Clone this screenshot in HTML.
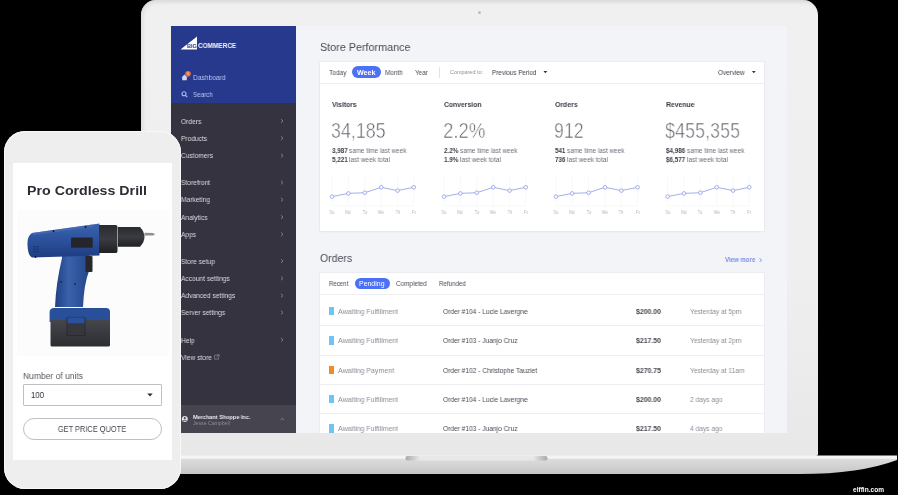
<!DOCTYPE html>
<html><head><meta charset="utf-8"><style>
html,body{margin:0;padding:0;background:#000;width:898px;height:495px;overflow:hidden}
body{position:relative;font-family:'Liberation Sans', sans-serif}
span{position:absolute;white-space:nowrap;will-change:transform}
</style></head><body>
<div style="position:absolute;left:141px;top:0px;width:677px;height:456px;background:linear-gradient(#dcdcdc 0px,#ebebeb 3px,#f0f0f0 6px,#efefef 60%,#e8e8e8 100%);border-radius:15px 15px 2px 2px;box-shadow:inset 3px 2px 4px -1px #dcdcdc"></div>
<div style="position:absolute;left:477.5px;top:11px;width:3px;height:3px;border-radius:50%;background:#bdbdbd"></div>
<svg style="position:absolute;left:0;top:0" width="898" height="495">
<defs>
<linearGradient id="bg" x1="0" y1="0" x2="0" y2="1">
<stop offset="0" stop-color="#f4f4f4"/><stop offset="0.15" stop-color="#f4f4f4"/><stop offset="0.2" stop-color="#dcdcdc"/><stop offset="0.85" stop-color="#cacaca"/><stop offset="1" stop-color="#c4c4c4"/>
</linearGradient>
<linearGradient id="nt" x1="0" y1="0" x2="1" y2="0">
<stop offset="0" stop-color="#a8a8a8"/><stop offset="0.1" stop-color="#e8e8e8"/><stop offset="0.9" stop-color="#e8e8e8"/><stop offset="1" stop-color="#a8a8a8"/>
</linearGradient>
</defs>
<path d="M62 455.5 L897 455.5 L897 460 Q860 474 800 474 L160 474 Q100 474 62 460 Z" fill="url(#bg)"/>
<rect x="405.5" y="456" width="142" height="4.5" rx="2" fill="url(#nt)"/>
</svg>
<div style="position:absolute;left:171px;top:26px;width:616px;height:407px;background:#f3f4f7;overflow:hidden"></div>
<div style="position:absolute;left:171px;top:26px;width:125px;height:77px;background:#26398c"></div>
<div style="position:absolute;left:171px;top:103px;width:125px;height:302px;background:#34333f"></div>
<div style="position:absolute;left:171px;top:405px;width:125px;height:28px;background:#45444f"></div>
<svg style="position:absolute;left:0;top:0" width="898" height="495"><path d="M180.5 49.5 L197 36.5 L197 49.5 Z" fill="#fff"/></svg>
<svg style="position:absolute;left:0;top:0" width="898" height="495">
<path d="M181.5 77.5 L184.5 74.5 L187.5 77.5 L186.8 77.5 L186.8 80.2 L182.2 80.2 L182.2 77.5 Z" fill="#d0d8fa"/>
<circle cx="188" cy="73.8" r="2.8" fill="#e9743f"/><path d="M188 72.3 L188 74.6" stroke="#fff" stroke-width="0.6"/>
<circle cx="184" cy="93.8" r="2" fill="none" stroke="#aab6f2" stroke-width="1.1"/>
<path d="M185.5 95.3 L187.3 97.1" stroke="#aab6f2" stroke-width="1.2"/>
</svg>
<svg style="position:absolute;left:0;top:0" width="898" height="495"><path d="M281 119.2 L283 121 L281 122.8" fill="none" stroke="#8e8d98" stroke-width="0.8"/></svg>
<svg style="position:absolute;left:0;top:0" width="898" height="495"><path d="M281 136.39999999999998 L283 138.2 L281 140.0" fill="none" stroke="#8e8d98" stroke-width="0.8"/></svg>
<svg style="position:absolute;left:0;top:0" width="898" height="495"><path d="M281 153.79999999999998 L283 155.6 L281 157.4" fill="none" stroke="#8e8d98" stroke-width="0.8"/></svg>
<svg style="position:absolute;left:0;top:0" width="898" height="495"><path d="M281 180.7 L283 182.5 L281 184.3" fill="none" stroke="#8e8d98" stroke-width="0.8"/></svg>
<svg style="position:absolute;left:0;top:0" width="898" height="495"><path d="M281 197.89999999999998 L283 199.7 L281 201.5" fill="none" stroke="#8e8d98" stroke-width="0.8"/></svg>
<svg style="position:absolute;left:0;top:0" width="898" height="495"><path d="M281 215.29999999999998 L283 217.1 L281 218.9" fill="none" stroke="#8e8d98" stroke-width="0.8"/></svg>
<svg style="position:absolute;left:0;top:0" width="898" height="495"><path d="M281 232.5 L283 234.3 L281 236.10000000000002" fill="none" stroke="#8e8d98" stroke-width="0.8"/></svg>
<svg style="position:absolute;left:0;top:0" width="898" height="495"><path d="M281 259.3 L283 261.1 L281 262.90000000000003" fill="none" stroke="#8e8d98" stroke-width="0.8"/></svg>
<svg style="position:absolute;left:0;top:0" width="898" height="495"><path d="M281 276.59999999999997 L283 278.4 L281 280.2" fill="none" stroke="#8e8d98" stroke-width="0.8"/></svg>
<svg style="position:absolute;left:0;top:0" width="898" height="495"><path d="M281 293.8 L283 295.6 L281 297.40000000000003" fill="none" stroke="#8e8d98" stroke-width="0.8"/></svg>
<svg style="position:absolute;left:0;top:0" width="898" height="495"><path d="M281 310.7 L283 312.5 L281 314.3" fill="none" stroke="#8e8d98" stroke-width="0.8"/></svg>
<svg style="position:absolute;left:0;top:0" width="898" height="495"><path d="M281 338.0 L283 339.8 L281 341.6" fill="none" stroke="#8e8d98" stroke-width="0.8"/></svg>
<svg style="position:absolute;left:0;top:0" width="898" height="495"><path d="M217.5 355.2 L214.6 355.2 L214.6 359.2 L218.6 359.2 L218.6 356.6" fill="none" stroke="#8e8d98" stroke-width="0.7"/><path d="M216.4 357.4 L219 354.8 M217.3 354.6 L219.2 354.6 L219.2 356.5" fill="none" stroke="#8e8d98" stroke-width="0.7"/></svg>
<svg style="position:absolute;left:0;top:0" width="898" height="495">
<circle cx="184.8" cy="419" r="3" fill="#dcdce3"/>
<circle cx="184.8" cy="418" r="1" fill="#45444f"/>
<path d="M183 421 Q184.8 419 186.6 421" stroke="#45444f" stroke-width="0.9" fill="none"/>
<path d="M280.5 420 L282.3 418.3 L284.1 420" fill="none" stroke="#8e8d98" stroke-width="0.8"/>
</svg>
<div style="position:absolute;left:319.8px;top:62px;width:444.6px;height:168.5px;background:#fff;box-shadow:0 0 0 0.6px #e6e7eb, 0 1px 2px rgba(0,0,0,0.05)"></div>
<div style="position:absolute;left:319.8px;top:83px;width:445px;height:0.8px;background:#eceef2"></div>
<div style="position:absolute;left:351.5px;top:66.2px;width:29px;height:11.8px;border-radius:6px;background:#4c70f6"></div>
<div style="position:absolute;left:439.2px;top:67px;width:0.7px;height:11px;background:#e2e3e8"></div>
<svg style="position:absolute;left:0;top:0" width="898" height="495"><path d="M543.5 71 L547.3 71 L545.4 73.2 Z" fill="#333"/><path d="M751.9 71 L755.7 71 L753.8 73.2 Z" fill="#333"/></svg>
<svg style="position:absolute;left:0;top:0" width="898" height="495"><line x1="332.1" y1="176.5" x2="332.1" y2="206" stroke="#f3f4f6" stroke-width="0.6"/><line x1="348.40000000000003" y1="176.5" x2="348.40000000000003" y2="206" stroke="#f3f4f6" stroke-width="0.6"/><line x1="364.8" y1="176.5" x2="364.8" y2="206" stroke="#f3f4f6" stroke-width="0.6"/><line x1="381.20000000000005" y1="176.5" x2="381.20000000000005" y2="206" stroke="#f3f4f6" stroke-width="0.6"/><line x1="397.6" y1="176.5" x2="397.6" y2="206" stroke="#f3f4f6" stroke-width="0.6"/><line x1="413.8" y1="176.5" x2="413.8" y2="206" stroke="#f3f4f6" stroke-width="0.6"/><line x1="332.1" y1="206" x2="413.8" y2="206" stroke="#f3f4f6" stroke-width="0.6"/><polyline points="332.1,196.6 348.40000000000003,193.4 364.8,192.7 381.20000000000005,187.3 397.6,190.6 413.8,187.3" fill="none" stroke="#8c9ae6" stroke-width="0.8"/><circle cx="332.1" cy="196.6" r="1.8" fill="#fff" stroke="#8c9ae6" stroke-width="0.8"/><circle cx="348.40000000000003" cy="193.4" r="1.8" fill="#fff" stroke="#8c9ae6" stroke-width="0.8"/><circle cx="364.8" cy="192.7" r="1.8" fill="#fff" stroke="#8c9ae6" stroke-width="0.8"/><circle cx="381.20000000000005" cy="187.3" r="1.8" fill="#fff" stroke="#8c9ae6" stroke-width="0.8"/><circle cx="397.6" cy="190.6" r="1.8" fill="#fff" stroke="#8c9ae6" stroke-width="0.8"/><circle cx="413.8" cy="187.3" r="1.8" fill="#fff" stroke="#8c9ae6" stroke-width="0.8"/><line x1="444.1" y1="176.5" x2="444.1" y2="206" stroke="#f3f4f6" stroke-width="0.6"/><line x1="460.40000000000003" y1="176.5" x2="460.40000000000003" y2="206" stroke="#f3f4f6" stroke-width="0.6"/><line x1="476.8" y1="176.5" x2="476.8" y2="206" stroke="#f3f4f6" stroke-width="0.6"/><line x1="493.20000000000005" y1="176.5" x2="493.20000000000005" y2="206" stroke="#f3f4f6" stroke-width="0.6"/><line x1="509.6" y1="176.5" x2="509.6" y2="206" stroke="#f3f4f6" stroke-width="0.6"/><line x1="525.8000000000001" y1="176.5" x2="525.8000000000001" y2="206" stroke="#f3f4f6" stroke-width="0.6"/><line x1="444.1" y1="206" x2="525.8000000000001" y2="206" stroke="#f3f4f6" stroke-width="0.6"/><polyline points="444.1,196.6 460.40000000000003,193.4 476.8,192.7 493.20000000000005,187.3 509.6,190.6 525.8000000000001,187.3" fill="none" stroke="#8c9ae6" stroke-width="0.8"/><circle cx="444.1" cy="196.6" r="1.8" fill="#fff" stroke="#8c9ae6" stroke-width="0.8"/><circle cx="460.40000000000003" cy="193.4" r="1.8" fill="#fff" stroke="#8c9ae6" stroke-width="0.8"/><circle cx="476.8" cy="192.7" r="1.8" fill="#fff" stroke="#8c9ae6" stroke-width="0.8"/><circle cx="493.20000000000005" cy="187.3" r="1.8" fill="#fff" stroke="#8c9ae6" stroke-width="0.8"/><circle cx="509.6" cy="190.6" r="1.8" fill="#fff" stroke="#8c9ae6" stroke-width="0.8"/><circle cx="525.8000000000001" cy="187.3" r="1.8" fill="#fff" stroke="#8c9ae6" stroke-width="0.8"/><line x1="555.9" y1="176.5" x2="555.9" y2="206" stroke="#f3f4f6" stroke-width="0.6"/><line x1="572.1999999999999" y1="176.5" x2="572.1999999999999" y2="206" stroke="#f3f4f6" stroke-width="0.6"/><line x1="588.6" y1="176.5" x2="588.6" y2="206" stroke="#f3f4f6" stroke-width="0.6"/><line x1="605.0" y1="176.5" x2="605.0" y2="206" stroke="#f3f4f6" stroke-width="0.6"/><line x1="621.4" y1="176.5" x2="621.4" y2="206" stroke="#f3f4f6" stroke-width="0.6"/><line x1="637.6" y1="176.5" x2="637.6" y2="206" stroke="#f3f4f6" stroke-width="0.6"/><line x1="555.9" y1="206" x2="637.6" y2="206" stroke="#f3f4f6" stroke-width="0.6"/><polyline points="555.9,196.6 572.1999999999999,193.4 588.6,192.7 605.0,187.3 621.4,190.6 637.6,187.3" fill="none" stroke="#8c9ae6" stroke-width="0.8"/><circle cx="555.9" cy="196.6" r="1.8" fill="#fff" stroke="#8c9ae6" stroke-width="0.8"/><circle cx="572.1999999999999" cy="193.4" r="1.8" fill="#fff" stroke="#8c9ae6" stroke-width="0.8"/><circle cx="588.6" cy="192.7" r="1.8" fill="#fff" stroke="#8c9ae6" stroke-width="0.8"/><circle cx="605.0" cy="187.3" r="1.8" fill="#fff" stroke="#8c9ae6" stroke-width="0.8"/><circle cx="621.4" cy="190.6" r="1.8" fill="#fff" stroke="#8c9ae6" stroke-width="0.8"/><circle cx="637.6" cy="187.3" r="1.8" fill="#fff" stroke="#8c9ae6" stroke-width="0.8"/><line x1="667.6" y1="176.5" x2="667.6" y2="206" stroke="#f3f4f6" stroke-width="0.6"/><line x1="683.9" y1="176.5" x2="683.9" y2="206" stroke="#f3f4f6" stroke-width="0.6"/><line x1="700.3000000000001" y1="176.5" x2="700.3000000000001" y2="206" stroke="#f3f4f6" stroke-width="0.6"/><line x1="716.7" y1="176.5" x2="716.7" y2="206" stroke="#f3f4f6" stroke-width="0.6"/><line x1="733.1" y1="176.5" x2="733.1" y2="206" stroke="#f3f4f6" stroke-width="0.6"/><line x1="749.3000000000001" y1="176.5" x2="749.3000000000001" y2="206" stroke="#f3f4f6" stroke-width="0.6"/><line x1="667.6" y1="206" x2="749.3000000000001" y2="206" stroke="#f3f4f6" stroke-width="0.6"/><polyline points="667.6,196.6 683.9,193.4 700.3000000000001,192.7 716.7,187.3 733.1,190.6 749.3000000000001,187.3" fill="none" stroke="#8c9ae6" stroke-width="0.8"/><circle cx="667.6" cy="196.6" r="1.8" fill="#fff" stroke="#8c9ae6" stroke-width="0.8"/><circle cx="683.9" cy="193.4" r="1.8" fill="#fff" stroke="#8c9ae6" stroke-width="0.8"/><circle cx="700.3000000000001" cy="192.7" r="1.8" fill="#fff" stroke="#8c9ae6" stroke-width="0.8"/><circle cx="716.7" cy="187.3" r="1.8" fill="#fff" stroke="#8c9ae6" stroke-width="0.8"/><circle cx="733.1" cy="190.6" r="1.8" fill="#fff" stroke="#8c9ae6" stroke-width="0.8"/><circle cx="749.3000000000001" cy="187.3" r="1.8" fill="#fff" stroke="#8c9ae6" stroke-width="0.8"/></svg>
<svg style="position:absolute;left:0;top:0" width="898" height="495"><path d="M759.6 258.2 L761.5 260.1 L759.6 262" fill="none" stroke="#7a8fe6" stroke-width="1"/></svg>
<div style="position:absolute;left:319.8px;top:272.8px;width:444.6px;height:160.2px;background:#fff;box-shadow:0 0 0 0.6px #e6e7eb"></div>
<div style="position:absolute;left:354.5px;top:278px;width:35px;height:11px;border-radius:6px;background:#4c70f6"></div>
<div style="position:absolute;left:319.8px;top:294px;width:445.2px;height:0.8px;background:#eceef2"></div>
<div style="position:absolute;left:319.8px;top:324.9px;width:445.2px;height:0.8px;background:#eceef2"></div>
<div style="position:absolute;left:319.8px;top:354.6px;width:445.2px;height:0.8px;background:#eceef2"></div>
<div style="position:absolute;left:319.8px;top:384px;width:445.2px;height:0.8px;background:#eceef2"></div>
<div style="position:absolute;left:319.8px;top:413.3px;width:445.2px;height:0.8px;background:#eceef2"></div>
<div style="position:absolute;left:329px;top:306.7px;width:4.7px;height:8.5px;background:#6ec5f0"></div>
<div style="position:absolute;left:329px;top:336.1px;width:4.7px;height:8.5px;background:#6ec5f0"></div>
<div style="position:absolute;left:329px;top:365.8px;width:4.7px;height:8.5px;background:#f08c22"></div>
<div style="position:absolute;left:329px;top:394.5px;width:4.7px;height:8.5px;background:#6ec5f0"></div>
<div style="position:absolute;left:329px;top:424.0px;width:4.7px;height:8.5px;background:#6ec5f0"></div>
<div style="position:absolute;left:4px;top:130.5px;width:176.6px;height:358.5px;background:#eeeeee;border-radius:21px;box-shadow:inset 0 0 0 1px #f8f8f8"></div>
<div style="position:absolute;left:12.9px;top:162.6px;width:159.4px;height:297.4px;background:#fff"></div>
<div style="position:absolute;left:17px;top:210px;width:152px;height:146px;background:#fcfcfc"></div>
<svg style="position:absolute;left:0;top:0" width="898" height="495">
<defs>
<linearGradient id="dg" x1="0" y1="0" x2="0" y2="1"><stop offset="0" stop-color="#3b63ad"/><stop offset="0.5" stop-color="#2c519c"/><stop offset="1" stop-color="#1e3c80"/></linearGradient>
<linearGradient id="hg" x1="0" y1="0" x2="1" y2="0"><stop offset="0" stop-color="#1f3f84"/><stop offset="0.4" stop-color="#3a62ab"/><stop offset="1" stop-color="#24468c"/></linearGradient>
<linearGradient id="bk" x1="0" y1="0" x2="0" y2="1"><stop offset="0" stop-color="#46474c"/><stop offset="1" stop-color="#2c2d31"/></linearGradient>
<linearGradient id="ck" x1="0" y1="0" x2="0" y2="1"><stop offset="0" stop-color="#2a2b2f"/><stop offset="0.5" stop-color="#3a3b40"/><stop offset="1" stop-color="#1f2023"/></linearGradient>
</defs>
<path d="M62 254 L89 254 L89 271 Q84 284 83 307 L55 307 Q56 283 62 258 Z" fill="url(#hg)"/>
<path d="M49.6 322 L49.6 312 Q50 308 54 308 L106 308 Q110 308 110 312 L110 322 Z" fill="#2a4f99"/>
<rect x="50.5" y="319.5" width="59.5" height="27" rx="1.5" fill="url(#bk)"/>
<path d="M67 317.5 L85 317.5 L85 335.5 L67 335.5 Z" fill="#36373c" stroke="#222327" stroke-width="0.6"/><path d="M67.3 317.2 L84.7 317.2 L84.7 323.5 L67.3 323.5 Z" fill="#2c5099" stroke="#1d3a7a" stroke-width="0.5"/>
<path d="M32 233 Q27 236 27.5 245 Q28 256 32 257.5 L99.5 255.5 L99.5 223.5 Z" fill="url(#dg)"/>
<path d="M32 233 L93 224.6 L93 227 L33 235 Z" fill="#4a70b8" opacity="0.6"/>
<rect x="71" y="237.4" width="21.7" height="10.3" rx="1" fill="#24262c"/>
<path d="M99 225 L116 225 Q117.5 225.5 117.5 227 L117.5 251 Q117.5 253 116 253 L99 253 Z" fill="url(#ck)"/>
<path d="M118 227 L140 227 Q144.5 232 144.5 237 Q144.5 242 140 246.8 L118 246.8 Z" fill="url(#ck)"/>
<path d="M144.5 232.8 L153 233 L155.2 234.2 L153 235.6 L144.5 235.6 Z" fill="#8e9094"/>
<rect x="85.5" y="256" width="7" height="16" rx="1" fill="#27282c"/>
<path d="M33 247 L39 246.5 M33 249.5 L39 249 M33 252 L39 251.5" stroke="#17306a" stroke-width="0.8"/>
<circle cx="35.5" cy="257" r="0.9" fill="#111"/>
<circle cx="53.5" cy="231" r="0.9" fill="#111"/>
<circle cx="85.5" cy="227" r="0.9" fill="#111"/>
<circle cx="61" cy="282" r="0.8" fill="#111"/>
<circle cx="75" cy="284" r="0.8" fill="#111"/>
</svg>
<div style="position:absolute;left:23.1px;top:384.1px;width:139.3px;height:21.5px;border:0.9px solid #c0c0c4;border-radius:1px;box-sizing:border-box"></div>
<svg style="position:absolute;left:0;top:0" width="898" height="495"><path d="M147.3 393.6 L152.7 393.6 L150 396.6 Z" fill="#2b2c36"/></svg>
<div style="position:absolute;left:23.1px;top:418px;width:139.3px;height:21.6px;border:0.9px solid #c0c0c4;border-radius:11px;box-sizing:border-box"></div>
<span id="t0" style="left:187.00px;top:43.86px;font-size:5.6px;line-height:5.6px;font-weight:700;color:#26398c;transform:scaleX(1.005);transform-origin:0 0;">BIG</span><span id="t1" style="left:197.80px;top:42.96px;font-size:6.9px;line-height:6.9px;font-weight:700;color:#f4f5fb;transform:scaleX(0.932);transform-origin:0 0;">COMMERCE</span><span id="t2" style="left:192.80px;top:74.05px;font-size:7.5px;line-height:7.5px;font-weight:400;color:#b9c3f3;transform:scaleX(0.891);transform-origin:0 0;">Dashboard</span><span id="t3" style="left:192.70px;top:91.05px;font-size:7.5px;line-height:7.5px;font-weight:400;color:#b9c3f3;transform:scaleX(0.837);transform-origin:0 0;">Search</span><span id="t4" style="left:180.80px;top:117.75px;font-size:7.5px;line-height:7.5px;font-weight:400;color:#dcdce3;transform:scaleX(0.885);transform-origin:0 0;">Orders</span><span id="t5" style="left:180.80px;top:134.95px;font-size:7.5px;line-height:7.5px;font-weight:400;color:#dcdce3;transform:scaleX(0.885);transform-origin:0 0;">Products</span><span id="t6" style="left:180.80px;top:152.35px;font-size:7.5px;line-height:7.5px;font-weight:400;color:#dcdce3;transform:scaleX(0.885);transform-origin:0 0;">Customers</span><span id="t7" style="left:180.80px;top:179.25px;font-size:7.5px;line-height:7.5px;font-weight:400;color:#dcdce3;transform:scaleX(0.885);transform-origin:0 0;">Storefront</span><span id="t8" style="left:180.80px;top:196.45px;font-size:7.5px;line-height:7.5px;font-weight:400;color:#dcdce3;transform:scaleX(0.885);transform-origin:0 0;">Marketing</span><span id="t9" style="left:180.80px;top:213.85px;font-size:7.5px;line-height:7.5px;font-weight:400;color:#dcdce3;transform:scaleX(0.885);transform-origin:0 0;">Analytics</span><span id="t10" style="left:180.80px;top:231.05px;font-size:7.5px;line-height:7.5px;font-weight:400;color:#dcdce3;transform:scaleX(0.885);transform-origin:0 0;">Apps</span><span id="t11" style="left:180.80px;top:257.85px;font-size:7.5px;line-height:7.5px;font-weight:400;color:#dcdce3;transform:scaleX(0.885);transform-origin:0 0;">Store setup</span><span id="t12" style="left:180.80px;top:275.15px;font-size:7.5px;line-height:7.5px;font-weight:400;color:#dcdce3;transform:scaleX(0.885);transform-origin:0 0;">Account settings</span><span id="t13" style="left:180.80px;top:292.35px;font-size:7.5px;line-height:7.5px;font-weight:400;color:#dcdce3;transform:scaleX(0.885);transform-origin:0 0;">Advanced settings</span><span id="t14" style="left:180.80px;top:309.25px;font-size:7.5px;line-height:7.5px;font-weight:400;color:#dcdce3;transform:scaleX(0.885);transform-origin:0 0;">Server settings</span><span id="t15" style="left:180.80px;top:336.55px;font-size:7.5px;line-height:7.5px;font-weight:400;color:#dcdce3;transform:scaleX(0.885);transform-origin:0 0;">Help</span><span id="t16" style="left:180.80px;top:353.85px;font-size:7.5px;line-height:7.5px;font-weight:400;color:#dcdce3;transform:scaleX(0.885);transform-origin:0 0;">View store</span><span id="t17" style="left:192.60px;top:414.59px;font-size:5.8px;line-height:5.8px;font-weight:700;color:#e8e8ee;transform:scaleX(0.953);transform-origin:0 0;">Merchant Shoppe Inc.</span><span id="t18" style="left:192.60px;top:420.77px;font-size:5px;line-height:5px;font-weight:400;color:#8d8c98;transform:scaleX(1.034);transform-origin:0 0;">Jesse Campbell</span><span id="t19" style="left:319.80px;top:41.10px;font-size:11.7px;line-height:11.7px;font-weight:400;color:#4a4c56;transform:scaleX(0.923);transform-origin:0 0;">Store Performance</span><span id="t20" style="left:329.00px;top:68.67px;font-size:7px;line-height:7px;font-weight:400;color:#4a4c56;transform:scaleX(0.936);transform-origin:0 0;">Today</span><span id="t21" style="left:356.50px;top:68.67px;font-size:7px;line-height:7px;font-weight:700;color:#ffffff;transform:scaleX(1.018);transform-origin:0 0;">Week</span><span id="t22" style="left:385.40px;top:68.67px;font-size:7px;line-height:7px;font-weight:400;color:#4a4c56;transform:scaleX(0.914);transform-origin:0 0;">Month</span><span id="t23" style="left:414.80px;top:68.67px;font-size:7px;line-height:7px;font-weight:400;color:#4a4c56;transform:scaleX(0.904);transform-origin:0 0;">Year</span><span id="t24" style="left:449.50px;top:69.80px;font-size:5.2px;line-height:5.2px;font-weight:400;color:#8f919a;transform:scaleX(1.050);transform-origin:0 0;">Compared to:</span><span id="t25" style="left:491.60px;top:68.67px;font-size:7px;line-height:7px;font-weight:400;color:#3f414b;transform:scaleX(0.898);transform-origin:0 0;">Previous Period</span><span id="t26" style="left:718.40px;top:68.67px;font-size:7px;line-height:7px;font-weight:400;color:#3f414b;transform:scaleX(0.911);transform-origin:0 0;">Overview</span><span id="t27" style="left:331.60px;top:100.94px;font-size:7.4px;line-height:7.4px;font-weight:700;color:#3a3c46;transform:scaleX(0.912);transform-origin:0 0;">Visitors</span><span id="t28" style="left:330.90px;top:119.52px;font-size:21.6px;line-height:21.6px;font-weight:400;color:#5c5e68;transform:scaleX(0.827);transform-origin:0 0;-webkit-text-stroke:0.55px #fff;">34,185</span><span id="t29" style="left:331.60px;top:147.54px;font-size:6.8px;line-height:6.8px;font-weight:700;color:#3a3c46;transform:scaleX(0.920);transform-origin:0 0;">3,987</span><span id="t30" style="left:349.25px;top:147.54px;font-size:6.8px;line-height:6.8px;font-weight:400;color:#6d6f78;transform:scaleX(0.930);transform-origin:0 0;">same time last week</span><span id="t31" style="left:331.60px;top:157.04px;font-size:6.8px;line-height:6.8px;font-weight:700;color:#3a3c46;transform:scaleX(0.920);transform-origin:0 0;">5,221</span><span id="t32" style="left:349.25px;top:157.04px;font-size:6.8px;line-height:6.8px;font-weight:400;color:#6d6f78;transform:scaleX(0.950);transform-origin:0 0;">last week total</span><span id="t33" style="left:332.10px;top:210.91px;font-size:4.6px;line-height:4.6px;font-weight:400;color:#b4b6be;transform:translateX(-50%) scaleX(0.900);transform-origin:50% 0;">Su</span><span id="t34" style="left:348.40px;top:210.91px;font-size:4.6px;line-height:4.6px;font-weight:400;color:#b4b6be;transform:translateX(-50%) scaleX(0.900);transform-origin:50% 0;">Mo</span><span id="t35" style="left:364.80px;top:210.91px;font-size:4.6px;line-height:4.6px;font-weight:400;color:#b4b6be;transform:translateX(-50%) scaleX(0.900);transform-origin:50% 0;">Tu</span><span id="t36" style="left:381.20px;top:210.91px;font-size:4.6px;line-height:4.6px;font-weight:400;color:#b4b6be;transform:translateX(-50%) scaleX(0.900);transform-origin:50% 0;">We</span><span id="t37" style="left:397.60px;top:210.91px;font-size:4.6px;line-height:4.6px;font-weight:400;color:#b4b6be;transform:translateX(-50%) scaleX(0.900);transform-origin:50% 0;">Th</span><span id="t38" style="left:413.80px;top:210.91px;font-size:4.6px;line-height:4.6px;font-weight:400;color:#b4b6be;transform:translateX(-50%) scaleX(0.900);transform-origin:50% 0;">Fr</span><span id="t39" style="left:443.60px;top:100.94px;font-size:7.4px;line-height:7.4px;font-weight:700;color:#3a3c46;transform:scaleX(0.920);transform-origin:0 0;">Conversion</span><span id="t40" style="left:442.90px;top:119.52px;font-size:21.6px;line-height:21.6px;font-weight:400;color:#5c5e68;transform:scaleX(0.861);transform-origin:0 0;-webkit-text-stroke:0.55px #fff;">2.2%</span><span id="t41" style="left:443.60px;top:147.54px;font-size:6.8px;line-height:6.8px;font-weight:700;color:#3a3c46;transform:scaleX(0.920);transform-origin:0 0;">2.2%</span><span id="t42" style="left:459.86px;top:147.54px;font-size:6.8px;line-height:6.8px;font-weight:400;color:#6d6f78;transform:scaleX(0.930);transform-origin:0 0;">same time last week</span><span id="t43" style="left:443.60px;top:157.04px;font-size:6.8px;line-height:6.8px;font-weight:700;color:#3a3c46;transform:scaleX(0.920);transform-origin:0 0;">1.9%</span><span id="t44" style="left:459.86px;top:157.04px;font-size:6.8px;line-height:6.8px;font-weight:400;color:#6d6f78;transform:scaleX(0.950);transform-origin:0 0;">last week total</span><span id="t45" style="left:444.10px;top:210.91px;font-size:4.6px;line-height:4.6px;font-weight:400;color:#b4b6be;transform:translateX(-50%) scaleX(0.900);transform-origin:50% 0;">Su</span><span id="t46" style="left:460.40px;top:210.91px;font-size:4.6px;line-height:4.6px;font-weight:400;color:#b4b6be;transform:translateX(-50%) scaleX(0.900);transform-origin:50% 0;">Mo</span><span id="t47" style="left:476.80px;top:210.91px;font-size:4.6px;line-height:4.6px;font-weight:400;color:#b4b6be;transform:translateX(-50%) scaleX(0.900);transform-origin:50% 0;">Tu</span><span id="t48" style="left:493.20px;top:210.91px;font-size:4.6px;line-height:4.6px;font-weight:400;color:#b4b6be;transform:translateX(-50%) scaleX(0.900);transform-origin:50% 0;">We</span><span id="t49" style="left:509.60px;top:210.91px;font-size:4.6px;line-height:4.6px;font-weight:400;color:#b4b6be;transform:translateX(-50%) scaleX(0.900);transform-origin:50% 0;">Th</span><span id="t50" style="left:525.80px;top:210.91px;font-size:4.6px;line-height:4.6px;font-weight:400;color:#b4b6be;transform:translateX(-50%) scaleX(0.900);transform-origin:50% 0;">Fr</span><span id="t51" style="left:554.70px;top:100.94px;font-size:7.4px;line-height:7.4px;font-weight:700;color:#3a3c46;transform:scaleX(0.932);transform-origin:0 0;">Orders</span><span id="t52" style="left:554.00px;top:119.52px;font-size:21.6px;line-height:21.6px;font-weight:400;color:#5c5e68;transform:scaleX(0.824);transform-origin:0 0;-webkit-text-stroke:0.55px #fff;">912</span><span id="t53" style="left:554.70px;top:147.54px;font-size:6.8px;line-height:6.8px;font-weight:700;color:#3a3c46;transform:scaleX(0.920);transform-origin:0 0;">541</span><span id="t54" style="left:567.14px;top:147.54px;font-size:6.8px;line-height:6.8px;font-weight:400;color:#6d6f78;transform:scaleX(0.930);transform-origin:0 0;">same time last week</span><span id="t55" style="left:554.70px;top:157.04px;font-size:6.8px;line-height:6.8px;font-weight:700;color:#3a3c46;transform:scaleX(0.920);transform-origin:0 0;">736</span><span id="t56" style="left:567.14px;top:157.04px;font-size:6.8px;line-height:6.8px;font-weight:400;color:#6d6f78;transform:scaleX(0.950);transform-origin:0 0;">last week total</span><span id="t57" style="left:555.90px;top:210.91px;font-size:4.6px;line-height:4.6px;font-weight:400;color:#b4b6be;transform:translateX(-50%) scaleX(0.900);transform-origin:50% 0;">Su</span><span id="t58" style="left:572.20px;top:210.91px;font-size:4.6px;line-height:4.6px;font-weight:400;color:#b4b6be;transform:translateX(-50%) scaleX(0.900);transform-origin:50% 0;">Mo</span><span id="t59" style="left:588.60px;top:210.91px;font-size:4.6px;line-height:4.6px;font-weight:400;color:#b4b6be;transform:translateX(-50%) scaleX(0.900);transform-origin:50% 0;">Tu</span><span id="t60" style="left:605.00px;top:210.91px;font-size:4.6px;line-height:4.6px;font-weight:400;color:#b4b6be;transform:translateX(-50%) scaleX(0.900);transform-origin:50% 0;">We</span><span id="t61" style="left:621.40px;top:210.91px;font-size:4.6px;line-height:4.6px;font-weight:400;color:#b4b6be;transform:translateX(-50%) scaleX(0.900);transform-origin:50% 0;">Th</span><span id="t62" style="left:637.60px;top:210.91px;font-size:4.6px;line-height:4.6px;font-weight:400;color:#b4b6be;transform:translateX(-50%) scaleX(0.900);transform-origin:50% 0;">Fr</span><span id="t63" style="left:665.80px;top:100.94px;font-size:7.4px;line-height:7.4px;font-weight:700;color:#3a3c46;transform:scaleX(0.922);transform-origin:0 0;">Revenue</span><span id="t64" style="left:665.10px;top:119.52px;font-size:21.6px;line-height:21.6px;font-weight:400;color:#5c5e68;transform:scaleX(0.834);transform-origin:0 0;-webkit-text-stroke:0.55px #fff;">$455,355</span><span id="t65" style="left:665.80px;top:147.54px;font-size:6.8px;line-height:6.8px;font-weight:700;color:#3a3c46;transform:scaleX(0.920);transform-origin:0 0;">$4,986</span><span id="t66" style="left:686.93px;top:147.54px;font-size:6.8px;line-height:6.8px;font-weight:400;color:#6d6f78;transform:scaleX(0.930);transform-origin:0 0;">same time last week</span><span id="t67" style="left:665.80px;top:157.04px;font-size:6.8px;line-height:6.8px;font-weight:700;color:#3a3c46;transform:scaleX(0.920);transform-origin:0 0;">$6,577</span><span id="t68" style="left:686.93px;top:157.04px;font-size:6.8px;line-height:6.8px;font-weight:400;color:#6d6f78;transform:scaleX(0.950);transform-origin:0 0;">last week total</span><span id="t69" style="left:667.60px;top:210.91px;font-size:4.6px;line-height:4.6px;font-weight:400;color:#b4b6be;transform:translateX(-50%) scaleX(0.900);transform-origin:50% 0;">Su</span><span id="t70" style="left:683.90px;top:210.91px;font-size:4.6px;line-height:4.6px;font-weight:400;color:#b4b6be;transform:translateX(-50%) scaleX(0.900);transform-origin:50% 0;">Mo</span><span id="t71" style="left:700.30px;top:210.91px;font-size:4.6px;line-height:4.6px;font-weight:400;color:#b4b6be;transform:translateX(-50%) scaleX(0.900);transform-origin:50% 0;">Tu</span><span id="t72" style="left:716.70px;top:210.91px;font-size:4.6px;line-height:4.6px;font-weight:400;color:#b4b6be;transform:translateX(-50%) scaleX(0.900);transform-origin:50% 0;">We</span><span id="t73" style="left:733.10px;top:210.91px;font-size:4.6px;line-height:4.6px;font-weight:400;color:#b4b6be;transform:translateX(-50%) scaleX(0.900);transform-origin:50% 0;">Th</span><span id="t74" style="left:749.30px;top:210.91px;font-size:4.6px;line-height:4.6px;font-weight:400;color:#b4b6be;transform:translateX(-50%) scaleX(0.900);transform-origin:50% 0;">Fr</span><span id="t75" style="left:319.80px;top:252.77px;font-size:11.5px;line-height:11.5px;font-weight:400;color:#4a4c56;transform:scaleX(0.913);transform-origin:0 0;">Orders</span><span id="t76" style="left:724.90px;top:257.17px;font-size:6.3px;line-height:6.3px;font-weight:700;color:#7a8fe6;transform:scaleX(0.965);transform-origin:0 0;">View more</span><span id="t77" style="left:329.00px;top:280.84px;font-size:6.8px;line-height:6.8px;font-weight:400;color:#4a4c56;transform:scaleX(0.896);transform-origin:0 0;">Recent</span><span id="t78" style="left:359.30px;top:280.84px;font-size:6.8px;line-height:6.8px;font-weight:400;color:#ffffff;transform:scaleX(1.022);transform-origin:0 0;">Pending</span><span id="t79" style="left:395.50px;top:280.84px;font-size:6.8px;line-height:6.8px;font-weight:400;color:#4a4c56;transform:scaleX(0.937);transform-origin:0 0;">Completed</span><span id="t80" style="left:438.60px;top:280.84px;font-size:6.8px;line-height:6.8px;font-weight:400;color:#4a4c56;transform:scaleX(0.909);transform-origin:0 0;">Refunded</span><span id="t81" style="left:337.60px;top:307.91px;font-size:7.2px;line-height:7.2px;font-weight:400;color:#8b8d96;transform:scaleX(0.975);transform-origin:0 0;">Awaiting Fulfillment</span><span id="t82" style="left:443.10px;top:307.91px;font-size:7.2px;line-height:7.2px;font-weight:400;color:#464852;transform:scaleX(0.920);transform-origin:0 0;">Order #104 - Lucie Lavergne</span><span id="t83" style="left:636.40px;top:307.91px;font-size:7.2px;line-height:7.2px;font-weight:700;color:#44464f;transform:scaleX(0.960);transform-origin:0 0;">$200.00</span><span id="t84" style="left:689.70px;top:307.91px;font-size:7.2px;line-height:7.2px;font-weight:400;color:#8b8d96;transform:scaleX(0.920);transform-origin:0 0;">Yesterday at 5pm</span><span id="t85" style="left:337.60px;top:337.31px;font-size:7.2px;line-height:7.2px;font-weight:400;color:#8b8d96;transform:scaleX(0.975);transform-origin:0 0;">Awaiting Fulfillment</span><span id="t86" style="left:443.10px;top:337.31px;font-size:7.2px;line-height:7.2px;font-weight:400;color:#464852;transform:scaleX(0.920);transform-origin:0 0;">Order #103 - Juanjo Cruz</span><span id="t87" style="left:636.40px;top:337.31px;font-size:7.2px;line-height:7.2px;font-weight:700;color:#44464f;transform:scaleX(0.960);transform-origin:0 0;">$217.50</span><span id="t88" style="left:689.70px;top:337.31px;font-size:7.2px;line-height:7.2px;font-weight:400;color:#8b8d96;transform:scaleX(0.920);transform-origin:0 0;">Yesterday at 2pm</span><span id="t89" style="left:337.60px;top:367.01px;font-size:7.2px;line-height:7.2px;font-weight:400;color:#8b8d96;transform:scaleX(0.975);transform-origin:0 0;">Awaiting Payment</span><span id="t90" style="left:443.10px;top:367.01px;font-size:7.2px;line-height:7.2px;font-weight:400;color:#464852;transform:scaleX(0.920);transform-origin:0 0;">Order #102 - Christophe Tauziet</span><span id="t91" style="left:636.40px;top:367.01px;font-size:7.2px;line-height:7.2px;font-weight:700;color:#44464f;transform:scaleX(0.960);transform-origin:0 0;">$270.75</span><span id="t92" style="left:689.70px;top:367.01px;font-size:7.2px;line-height:7.2px;font-weight:400;color:#8b8d96;transform:scaleX(0.920);transform-origin:0 0;">Yesterday at 11am</span><span id="t93" style="left:337.60px;top:395.71px;font-size:7.2px;line-height:7.2px;font-weight:400;color:#8b8d96;transform:scaleX(0.975);transform-origin:0 0;">Awaiting Fulfillment</span><span id="t94" style="left:443.10px;top:395.71px;font-size:7.2px;line-height:7.2px;font-weight:400;color:#464852;transform:scaleX(0.920);transform-origin:0 0;">Order #104 - Lucie Lavergne</span><span id="t95" style="left:636.40px;top:395.71px;font-size:7.2px;line-height:7.2px;font-weight:700;color:#44464f;transform:scaleX(0.960);transform-origin:0 0;">$200.00</span><span id="t96" style="left:689.70px;top:395.71px;font-size:7.2px;line-height:7.2px;font-weight:400;color:#8b8d96;transform:scaleX(0.920);transform-origin:0 0;">2 days ago</span><span id="t97" style="left:337.60px;top:425.21px;font-size:7.2px;line-height:7.2px;font-weight:400;color:#8b8d96;transform:scaleX(0.975);transform-origin:0 0;">Awaiting Fulfillment</span><span id="t98" style="left:443.10px;top:425.21px;font-size:7.2px;line-height:7.2px;font-weight:400;color:#464852;transform:scaleX(0.920);transform-origin:0 0;">Order #103 - Juanjo Cruz</span><span id="t99" style="left:636.40px;top:425.21px;font-size:7.2px;line-height:7.2px;font-weight:700;color:#44464f;transform:scaleX(0.960);transform-origin:0 0;">$217.50</span><span id="t100" style="left:689.70px;top:425.21px;font-size:7.2px;line-height:7.2px;font-weight:400;color:#8b8d96;transform:scaleX(0.920);transform-origin:0 0;">4 days ago</span><span id="t101" style="left:27.40px;top:185.33px;font-size:12.6px;line-height:12.6px;font-weight:700;color:#2b2c34;transform:scaleX(1.128);transform-origin:0 0;">Pro Cordless Drill</span><span id="t102" style="left:23.10px;top:371.06px;font-size:9.5px;line-height:9.5px;font-weight:400;color:#55565e;transform:scaleX(0.895);transform-origin:0 0;">Number of units</span><span id="t103" style="left:30.50px;top:390.60px;font-size:8.5px;line-height:8.5px;font-weight:400;color:#2b2c36;transform:scaleX(0.916);transform-origin:0 0;">100</span><span id="t104" style="left:91.90px;top:425.13px;font-size:9.3px;line-height:9.3px;font-weight:400;color:#45464d;transform:translateX(-50%) scaleX(0.798);transform-origin:50% 0;">GET PRICE QUOTE</span><span id="t105" style="left:853.00px;top:486.50px;font-size:6.5px;line-height:6.5px;font-weight:700;color:#ffffff;transform:scaleX(1.010);transform-origin:0 0;">elffin.com</span>
</body></html>
